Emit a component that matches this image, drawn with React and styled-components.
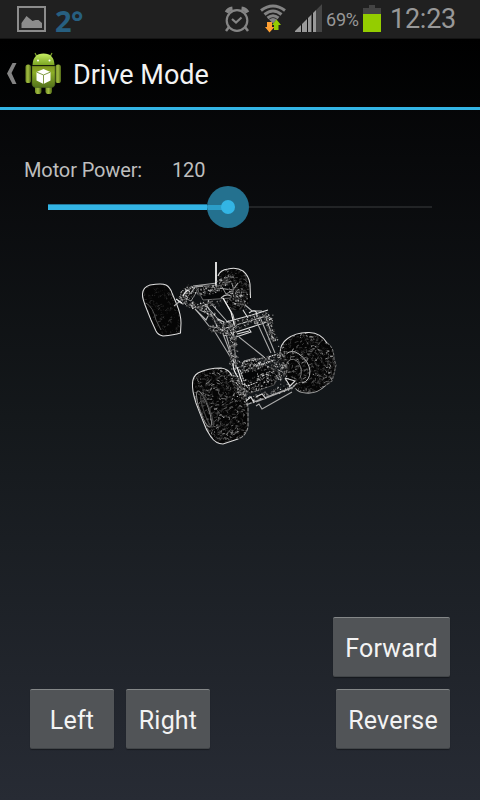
import React from 'react';
import styled, { createGlobalStyle } from 'styled-components';

const GlobalStyle = createGlobalStyle`
  * { box-sizing: border-box; }
  body { margin: 0; background: #000; }
`;

const Screen = styled.div`
  display: flex;
  flex-direction: column;
  width: 480px;
  height: 800px;
  overflow: hidden;
  font-family: Roboto, 'Noto Sans', sans-serif;
  color: #f3f3f3;
  background: linear-gradient(180deg, #000 0%, #08090b 20%, #14181b 52%, #272b34 100%);
`;

const StatusBar = styled.header`
  display: flex;
  align-items: flex-start;
  height: 39px;
  flex: none;
  background: #202020;
  border-bottom: 1px solid #141414;
  color: #989898;
  svg { display: block; flex: none; }
`;

const Temperature = styled.span`
  width: 36px;
  margin-left: 9px;
  font: 700 29px/41px 'Open Sans', 'Noto Sans', sans-serif;
  letter-spacing: -0.7px;
  color: #275f80;
`;

const StatusIcons = styled.div`
  display: flex;
  margin-left: auto;
  width: 256px;
`;

const Percent = styled.span`
  width: 37px;
  margin-left: 3px;
  font-size: 18px;
  line-height: 40px;
  letter-spacing: -0.2px;
`;

const Clock = styled.span`
  margin-left: 7px;
  font-size: 27px;
  line-height: 39px;
  letter-spacing: -0.25px;
`;

const ActionBar = styled.nav`
  display: flex;
  align-items: center;
  height: 71px;
  flex: none;
  padding-left: 6px;
  background: linear-gradient(#000, #030405);
  border-bottom: 3px solid #33b5e5;
`;

const Title = styled.h1`
  margin: 3px 0 0 11px;
  font-size: 27px;
  line-height: 36px;
  font-weight: 400;
`;

const Content = styled.main`
  display: flex;
  flex-direction: column;
  flex: 1;
`;

const PowerRow = styled.div`
  display: flex;
  height: 24px;
  margin: 48px 24px 0;
  font-size: 20px;
  line-height: 24px;
  letter-spacing: -0.12px;
  color: #bebebe;
`;

const PowerLabel = styled.span`
  width: 148px;
`;

const Slider = styled.div`
  display: flex;
  align-items: center;
  width: 384px;
  height: 44px;
  margin: 3px 0 0 48px;
`;

const Filled = styled.div`
  width: 159px;
  height: 6px;
  background: #33b5e5;
  border: solid #22789a;
  border-width: 1px 0 0;
`;

const Thumb = styled.div`
  display: grid;
  place-items: center;
  width: 42px;
  height: 42px;
  flex: none;
  border-radius: 50%;
  background: linear-gradient(#2b9dc8, #2b9dc8) 0 50% / 21px 5px no-repeat, #24718f;
  &::after {
    content: '';
    width: 14px;
    height: 14px;
    border-radius: 50%;
    background: #33b5e5;
  }
`;

const Rest = styled.div`
  flex: 1;
  height: 2px;
  background: #222426;
`;

const Crawler = styled.svg`
  display: block;
  width: 204px;
  height: 192px;
  margin: 27px 0 0 138px;
  flex: none;
`;

const Controls = styled.section`
  display: flex;
  flex-direction: column;
  gap: 12px;
  margin: auto 30px 51px;
`;

const ControlRow = styled.div`
  display: flex;
  justify-content: ${({ $end }) => ($end ? 'flex-end' : 'space-between')};
`;

const Pair = styled.div`
  display: flex;
  gap: 12px;
`;

const Button = styled.button`
  width: ${({ $width }) => $width}px;
  height: 60px;
  padding: 3px 0 0;
  border: 0;
  border-top: 1px solid #848788;
  border-bottom: 1px solid #414548;
  border-radius: 2px;
  background: #515457;
  box-shadow: 0 1px 1px rgba(0, 0, 0, 0.35);
  font: 400 25px/30px Roboto, 'Noto Sans', sans-serif;
  letter-spacing: 0.2px;
  color: #f3f3f3;
`;

const PictureIcon = () => (
  <svg width="46" height="38">
    <rect x="18" y="7" width="27" height="24" fill="#252525" stroke="#8c8c8c" strokeWidth="2" />
    <path d="M21.500 28v-5l5-7 6 5 3-1h3l3.500 3v5Z" fill="#8c8c8c" />
  </svg>
);

const AlarmIcon = () => (
  <svg width="30" height="38" fill="none" stroke="#858585">
    <circle cx="13" cy="20.500" r="10.300" strokeWidth="2.200" />
    <path d="M8 19l4 3.500 5.500-5" strokeWidth="2.200" />
    <path d="M2.500 12.500A8 8 0 0 1 8.500 8.500M17.500 8.500a8 8 0 0 1 6 4" strokeWidth="4" />
    <path d="M5 27l-3 4M21 27l3 4" strokeWidth="2.500" />
  </svg>
);

const WifiIcon = () => (
  <svg width="41" height="38">
    <g fill="none" stroke="#838383" strokeWidth="3">
      <path d="M7 10.500q12-9 24 0" />
      <path d="M10.500 14.500q8.500-7 17 0" />
      <path d="M13.500 18q5.500-4.500 11 0" />
    </g>
    <path d="M15 19.500q4-3 8 0l-4 4Z" fill="#838383" />
    <path d="M13 22h5v5h2.500L15.500 32.500 11 27h2Z" fill="#ffa033" />
    <path d="M20 30v-5h-2l4.500-5.500 4.500 5.500h-2.500v5Z" fill="#94cd00" />
  </svg>
);

const SignalIcon = () => (
  <svg width="28" height="38">
    <defs><clipPath id="signalShape"><path d="M-1 32L27 4V32Z" /></clipPath></defs>
    <g clipPath="url(#signalShape)">
      <path d="M0 2h27v30H0Z" fill="#111" />
      <path d="M0 2h6v30H0ZM7 2h5v30H7ZM13 2h3.500v30H13ZM18 2h3v30h-3Z" fill="#999" />
      <path d="M21 2h6v30h-6Z" fill="#454545" />
    </g>
  </svg>
);

const BatteryIcon = () => (
  <svg width="20" height="38">
    <path d="M0 8h6V5h6v3h6v24H0Z" fill="#444" />
    <path d="M0 14h18v18H0Z" fill="#94cd00" />
  </svg>
);

const BackIcon = () => (
  <svg width="12" height="26">
    <path d="M6.500 3h4L5.500 13l5 11H6.500L1 13.500Z" fill="#848484" />
  </svg>
);

const RobotIcon = styled(({ className }) => (
  <svg className={className} width="38" height="44" viewBox="0 0 38 44">
    <defs>
      <linearGradient id="robotBody" x2="0" y2="1"><stop stopColor="#80951f" /><stop offset=".3" stopColor="#8cae27" /><stop offset="1" stopColor="#53721b" /></linearGradient>
      <linearGradient id="robotHead" x2="0" y2="1"><stop stopColor="#c7ef63" /><stop offset="1" stopColor="#7ba524" /></linearGradient>
      <linearGradient id="robotLimb"><stop stopColor="#718d26" /><stop offset=".45" stopColor="#a2bd41" /><stop offset="1" stopColor="#4e6616" /></linearGradient>
    </defs>
    <path d="M13 6l-2-4M26 6l2-4" stroke="#80a52d" strokeWidth="1.200" />
    <g fill="url(#robotLimb)">
      <rect x="1.500" y="13.500" width="5.500" height="18.500" rx="2.600" />
      <rect x="31.500" y="13.500" width="5.500" height="18.500" rx="2.600" />
      <rect x="11" y="33" width="6.500" height="10" rx="2.800" />
      <rect x="21.500" y="33" width="6.500" height="10" rx="2.800" />
    </g>
    <path d="M8 15h23v17q0 4.500-4 4.500H12q-4 0-4-4.500Z" fill="url(#robotBody)" stroke="#496020" strokeWidth=".6" />
    <path d="M8.500 14Q9 2.500 19.500 2.500T30.500 14Z" fill="url(#robotHead)" />
    <circle cx="14" cy="9.500" r="1" fill="#fff" /><circle cx="25.500" cy="9.500" r="1" fill="#fff" />
    <path d="M19.500 18l7 3v8.500l-7 3.500-7-3.500V21Z" fill="#fff" />
    <path d="M12.500 21l7 3 7-3M19.500 24v9" fill="none" stroke="#829c47" strokeWidth="1" />
  </svg>
))`
  margin: 0 0 0 6px;
`;

const TIRES = [
  { id: 'rearLeft', cx: 162, cy: 310, rx: 21, ry: 29, n: 300, tone: 75, size: 2,
    d: 'M142.5 292Q143 287 150 285Q162 283 166 285Q170 287 172 293L177 305Q181 315 181 323L180.500 333Q174 335 163 336Q158 335 156 331L151 320L147 310Q142 298 142.500 292Z' },
  { id: 'rearRight', cx: 235, cy: 289, rx: 17, ry: 22, n: 340, tone: 130, size: 2.2,
    d: 'M218 276Q220 270 228 269Q237 267 243 271Q249 276 250 284Q252 293 249 301Q247 307 240 310Q231 312 226 306L222 295Z' },
  { id: 'frontRight', cx: 308, cy: 362, rx: 29, ry: 31, n: 700, tone: 180, size: 3.2,
    d: 'M280 354Q280 344 287 339Q296 332 309 332.500Q321 333 327 343Q334 347 334 359L336 365L334 374Q332 383 325 386Q317 394 306 393Q299 393 295 388L285 375Z' },
  { id: 'frontLeft', cx: 222, cy: 406, rx: 30, ry: 39, n: 900, tone: 180, size: 3.2,
    d: 'M192.500 383Q193 376 198 373Q208 368 221 368Q229 369 232 376L241 384Q246 389 246 398L248 407L248 427Q245 436 238 439L223 444Q216 444 211 437Q206 430 203 421L196 403Q192 391 192.500 383Z' },
];

function makeRandom(seed) {
  let s = seed;
  return () => {
    s = (s * 16807) % 2147483647;
    return s / 2147483647;
  };
}

function treadMarks(tire, index) {
  const random = makeRandom(index * 211 + 83);
  return Array.from({ length: tire.n }, () => {
    const x = tire.cx + (random() * 2 - 1) * tire.rx;
    const y = tire.cy + (random() * 2 - 1) * tire.ry;
    const a = random() * 3 - 0.8;
    const r = 0.6 + random() * tire.size;
    const shade = Math.round(15 + random() * random() * tire.tone);
    return {
      d: `M${x} ${y}q${Math.cos(a) * r + 1} ${Math.sin(a) * r - 1} ${Math.cos(a) * r} ${Math.sin(a) * r}`,
      color: `rgb(${shade},${shade},${shade})`,
    };
  });
}

const SPARS = [
  [180, 300, 190, 287, 6, 130], [185, 303, 203, 309, 5, 90], [186, 294, 220, 288, 8, 180],
  [188, 306, 219, 303, 6, 100], [203, 307, 219, 323, 6, 80], [218, 329, 270, 316, 9, 250],
  [232, 325, 234, 369, 8, 260], [267, 315, 274, 342, 7, 150], [238, 369, 281, 360, 12, 280],
  [240, 390, 279, 373, 14, 330], [247, 401, 292, 386, 6, 150], [281, 350, 284, 380, 10, 180],
  [219, 284, 232, 279, 8, 120], [231, 292, 244, 295, 8, 90], [211, 328, 225, 332, 6, 80],
  [235, 377, 242, 396, 8, 150], [232, 300, 246, 306, 8, 70],
];

function componentMarks() {
  const random = makeRandom(947);
  return SPARS.flatMap(([x1, y1, x2, y2, spread, count]) =>
    Array.from({ length: count }, () => {
      const t = random();
      const x = x1 + (x2 - x1) * t + (random() - 0.5) * spread;
      const y = y1 + (y2 - y1) * t + (random() - 0.5) * spread;
      const shade = Math.round(8 + random() ** 1.6 * 225);
      return { d: `M${x} ${y}l${random() * 3 - 1.5} ${random() * 2.4 - 1.2}`, color: `rgb(${shade},${shade},${shade})` };
    })
  );
}

const CrawlerDrawing = () => (
  <Crawler viewBox="138 256 204 192">
    {TIRES.map((tire, index) => (
      <g key={tire.id}>
        <clipPath id={tire.id}><path d={tire.d} /></clipPath>
        <path d={tire.d} fill="#050505" />
        <g clipPath={`url(#${tire.id})`} fill="none" strokeWidth="1">
          {treadMarks(tire, index).map((mark, i) => <path key={i} d={mark.d} stroke={mark.color} />)}
        </g>
      </g>
    ))}
    <g fill="none" stroke="#ddd" strokeWidth="1.050">
      <path d="M142.500 294Q143 287 150 285Q162 283 166 285Q170 287 172 293L177 305Q181 315 181 323L180.500 333Q174 335 163 336Q158 335 156 331L151 320L147 310Q142 298 142.500 294" />
      <path d="M218 276Q220 270 228 269Q237 267 243 271Q249 276 250 284L250.500 298" />
      <path d="M280 354Q280 344 287 339Q296 332 309 332.500Q321 333 327 343" />
      <path d="M327 343q7 4 7 16l2 6-2 9-2 7-7 5" stroke="#777" strokeDasharray="3 1" />
      <path d="M325 386Q317 394 306 393Q299 393 295 388" stroke="#aaa" />
      <path d="M238 439L223 444Q216 444 211 437Q206 430 203 421L196 403Q192 391 192.500 383Q193 376 198 373Q208 368 221 368Q229 369 232 376" />
      <path d="M241 384q5 4 5 14l2 9v20q-2 9-10 12" stroke="#999" strokeDasharray="4 1" />
    </g>
    <g fill="none" stroke="#888" strokeWidth="1">
      <ellipse cx="204" cy="409" rx="4.500" ry="19" transform="rotate(-19 204 409)" />
      <ellipse cx="207" cy="411" rx="3" ry="17" transform="rotate(-19 207 411)" stroke="#444" />
      <path d="M286 354Q292 349 299 354Q309 361 310 371Q310 381 302 383" stroke="#bbb" />
      <path d="M286 365Q290 356 297 361Q304 369 300 378" stroke="#777" />
      <path d="M146 303q7 4 10 17l5 10" stroke="#555" />
    </g>
    <g fill="#050607" stroke="#aaa" strokeWidth=".9">
      <path d="M188 289l4-3 5 5-6 10-6-3Z" />
      <path d="M196 287l20-2 17 3-2 10-28 2Z" stroke="#777" />
      <path d="M221 285l10-4 3 9-8 4Z" />
      <path d="M244 361l11-3 3 9-14 4Z" />
      <path d="M239 376l10-8 16-3 14 7-5 13-24 8-9-7Z" stroke="#555" />
    </g>
    <g fill="none" strokeWidth="1.100">
      <path d="M174 306l5-4 4 2 12-17 7-1 31 4 5-7M193 286l24-3M181 300v-5l5 4M192 308l15-3 11 23-9-2-12-15" stroke="#aaa" />
      <path d="M195 309l11 11 3-6-9-4M203 302l20 23M208 300l24 27M223 298l10 17 3 12M221 298q5-5 10-2M244 304l8 7h10" stroke="#bbb" />
      <path d="M216 287v-25" stroke="#fff" strokeWidth="1.700" />
      <path d="M216 331l50-15 6 3-8 4-40 13M226 322l26-7 16-5M218 319l6 3-2 9 8 4M243 310l5 8M249 313q8-6 8 4" stroke="#ddd" />
      <path d="M215 332l16 26M223 334l12 31M233 323l3 45M225 331l10 34M229 335l-2-5M239 337l25 20M254 316l17 37M260 317l15 36M265 314l9 28" stroke="#aaa" />
      <path d="M249 331l-12 3M230 339l21-7-2-3" stroke="#ddd" />
      <path d="M231 356l6 12 5-2 1-4 25-5 10-3M240 370l4 11M241 383l6 3 11-4M256 366l18-6" stroke="#ddd" strokeDasharray="2 .6" />
    </g>
    <g strokeWidth="1.150" fill="none">
      {componentMarks().map((mark, i) => <path key={i} d={mark.d} stroke={mark.color} />)}
      <path d="M246 405l47-18 4-4M256 402l36-14M256 406l3-2 3 5 30-17" stroke="#aaa" />
      <path d="M246 401l5-4 3 6M256 397l6-3 4 5M285 378l10 3-5 5-5-8" fill="#050505" stroke="#d8d8d8" />
      <path d="M233 363q0 8 5 14M237 367l5 15M183 296q2-5 6-6M176 299l6 4M223 298l8 14 3 12" stroke="#eee" />
    </g>
  </Crawler>
);

export default function App() {
  return (
    <>
      <GlobalStyle />
      <Screen>
        <StatusBar>
          <PictureIcon />
          <Temperature>2°</Temperature>
          <StatusIcons>
            <AlarmIcon />
            <WifiIcon />
            <SignalIcon />
            <Percent>69%</Percent>
            <BatteryIcon />
            <Clock>12:23</Clock>
          </StatusIcons>
        </StatusBar>
        <ActionBar>
          <BackIcon />
          <RobotIcon />
          <Title>Drive Mode</Title>
        </ActionBar>
        <Content>
          <PowerRow><PowerLabel>Motor Power:</PowerLabel><span>120</span></PowerRow>
          <Slider><Filled /><Thumb /><Rest /></Slider>
          <CrawlerDrawing />
          <Controls>
            <ControlRow $end><Button $width={117}>Forward</Button></ControlRow>
            <ControlRow>
              <Pair><Button $width={84}>Left</Button><Button $width={84}>Right</Button></Pair>
              <Button $width={114}>Reverse</Button>
            </ControlRow>
          </Controls>
        </Content>
      </Screen>
    </>
  );
}
